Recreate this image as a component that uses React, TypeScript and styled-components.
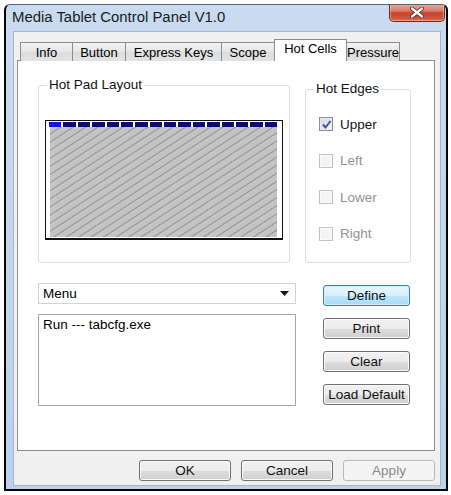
import React from 'react';
import styled, { createGlobalStyle, css } from 'styled-components';

const GlobalStyle = createGlobalStyle`
    html, body {
        margin: 0;
        padding: 0;
        background: #ffffff;
    }
    * {
        box-sizing: border-box;
    }
    body {
        font-family: 'Liberation Sans', Arial, sans-serif;
        font-size: 13.5px;
        color: #000;
    }
`;

const Window = styled.div`
    margin: 4px 0 0 4px;
    width: 444px;
    height: 487px;
    display: flex;
    flex-direction: column;
    border: 2px solid #050505;
    border-top: 1px solid #55677d;
    border-radius: 6px 6px 0 0;
    background: linear-gradient(#c9dbf1, #bcd1ea);
    overflow: hidden;
`;

const TitleBar = styled.div`
    height: 25px;
    flex: none;
    display: flex;
    align-items: flex-start;
    justify-content: space-between;
    padding-left: 6px;
    padding-right: 1px;
`;

const TitleText = styled.div`
    font-size: 14.9px;
    line-height: 25px;
    color: #1b1b1b;
`;

const CloseButton = styled.div`
    width: 56px;
    height: 18px;
    margin-top: -1px;
    display: flex;
    align-items: center;
    justify-content: center;
    border: 1px solid #6e2b20;
    border-top: none;
    border-radius: 0 0 5px 5px;
    background: linear-gradient(#e9aa9b 0%, #d9806b 40%, #c6442d 52%, #d0563c 85%, #e07a5c 100%);
    box-shadow: inset 0 0 0 1px rgba(255, 210, 200, 0.45);
`;

const FrameBody = styled.div`
    flex: 1;
    display: flex;
    padding: 1px 5px 4px 7px;
`;

const Client = styled.div`
    flex: 1;
    display: flex;
    flex-direction: column;
    background: #f0f0f0;
    border: 1px solid #a4b6cc;
    padding: 0 4px 4px 3px;
`;

const TabStrip = styled.div`
    height: 29px;
    margin-bottom: -1px;
    display: flex;
    align-items: flex-end;
    padding-left: 4px;
    position: relative;
    z-index: 1;
`;

const Tab = styled.div<{ $active?: boolean; $w: number }>`
    width: ${(p) => p.$w}px;
    height: 19px;
    display: flex;
    align-items: center;
    justify-content: center;
    white-space: nowrap;
    font-size: 13px;
    border: 1px solid #898c95;
    border-bottom: none;
    margin-left: -1px;
    background: linear-gradient(#f3f3f3, #e5e5e5 50%, #dcdcdc 51%, #e3e3e3);
    ${(p) =>
        p.$active &&
        css`
            height: 22px;
            padding-bottom: 4px;
            background: #ffffff;
        `}
`;

const TabPage = styled.div`
    width: 418px;
    height: 391px;
    background: #ffffff;
    border: 1px solid #898c95;
    padding: 16px 0 0 20px;
    display: flex;
    flex-direction: column;
`;

const TopRow = styled.div`
    display: flex;
    align-items: stretch;
    gap: 15px;
`;

const GroupBox = styled.fieldset<{ $w: number; $top?: number }>`
    width: ${(p) => p.$w}px;
    margin: ${(p) => p.$top || 0}px 0 0 0;
    padding: 0 6px 0 6px;
    border: 1px solid #d5dfe5;
    border-radius: 3px;
    min-width: 0;
`;

const Legend = styled.legend`
    padding: 0 2px;
    margin-left: 2px;
    line-height: 16px;
    font-size: 13.5px;
    color: #111;
`;

const Pad = styled.div`
    width: 238px;
    height: 120px;
    margin: 27px 0 22px 0;
    border: 1px solid #111;
    border-bottom-width: 2px;
    background: #ffffff;
    padding: 1px 5px 1px 3px;
    display: flex;
    flex-direction: column;
`;

const CellRow = styled.div`
    height: 5px;
    flex: none;
    display: flex;
    gap: 2px;
`;

const Cell = styled.div<{ $on?: boolean }>`
    flex: 1;
    background: ${(p) => (p.$on ? '#1010f0' : '#0a0a78')};
`;

const Hatch = styled.div`
    flex: 1;
    margin: 0 0 0 1px;
    background: repeating-linear-gradient(147deg, #c6c6c6 0px, #c2c2c2 5.2px, #9e9e9e 5.4px, #a4a4a4 6.6px, #c6c6c6 6.8px);
`;

const EdgeList = styled.div`
    display: flex;
    flex-direction: column;
    gap: 20.5px;
    padding: 19px 0 0 7px;
`;

const CheckRow = styled.div<{ $disabled?: boolean }>`
    height: 16px;
    display: flex;
    align-items: center;
    gap: 7px;
    color: ${(p) => (p.$disabled ? '#929292' : '#151515')};
`;

const CheckBox = styled.div<{ $checked?: boolean; $disabled?: boolean }>`
    width: 14px;
    height: 14px;
    display: flex;
    align-items: center;
    justify-content: center;
    border: 1px solid ${(p) => (p.$disabled ? '#c2c2c2' : '#8e8f8f')};
    background: ${(p) =>
        p.$disabled ? '#f4f4f4' : 'linear-gradient(135deg, #cfd7e3, #f4f6f9)'};
    box-shadow: inset 0 0 0 1px ${(p) => (p.$disabled ? '#fbfbfb' : '#e8ecf2')};
`;

const BottomRow = styled.div`
    display: flex;
    gap: 27px;
    margin-top: 20px;
`;

const LeftCol = styled.div`
    width: 258px;
    display: flex;
    flex-direction: column;
    gap: 10px;
`;

const Combo = styled.div`
    height: 21px;
    display: flex;
    align-items: center;
    justify-content: space-between;
    padding: 0 6px 0 4px;
    border: 1px solid #d2d2d2;
    background: #ffffff;
`;

const ListBox = styled.div`
    height: 92px;
    border: 1px solid #a3a8b0;
    background: #ffffff;
    padding: 2px 4px;
    line-height: 16px;
`;

const ButtonCol = styled.div`
    width: 87px;
    display: flex;
    flex-direction: column;
    gap: 12px;
    padding-top: 2px;
`;

const Button = styled.div<{ $primary?: boolean; $disabled?: boolean; $w?: number }>`
    width: ${(p) => (p.$w ? `${p.$w}px` : '100%')};
    height: 21px;
    display: flex;
    align-items: center;
    justify-content: center;
    white-space: nowrap;
    border: 1px solid #707070;
    border-radius: 3px;
    background: linear-gradient(#f2f2f2 0%, #ebebeb 50%, #dddddd 51%, #cfcfcf 100%);
    box-shadow: inset 0 0 0 1px #fbfbfb;
    color: #111;
    ${(p) =>
        p.$primary &&
        css`
            border-color: #3c7fb1;
            background: linear-gradient(#eaf6fd 0%, #d9f0fc 50%, #bee6fd 51%, #a7d9f5 100%);
            box-shadow: inset 0 0 0 1px #d6eefb;
        `}
    ${(p) =>
        p.$disabled &&
        css`
            border-color: #b6babd;
            background: #f4f4f4;
            box-shadow: none;
            color: #8a8a8a;
        `}
`;

const Footer = styled.div`
    display: flex;
    justify-content: flex-end;
    gap: 10px;
    margin-top: 9px;
    padding-right: 1px;
`;

const tabs = [
    { label: 'Info', w: 53 },
    { label: 'Button', w: 54 },
    { label: 'Express Keys', w: 97 },
    { label: 'Scope', w: 54 },
    { label: 'Hot Cells', w: 73, active: true },
    { label: 'Pressure', w: 54 },
];

const edges = [
    { label: 'Upper', checked: true, disabled: false },
    { label: 'Left', checked: false, disabled: true },
    { label: 'Lower', checked: false, disabled: true },
    { label: 'Right', checked: false, disabled: true },
];

function CloseGlyph() {
    return (
        <svg width="14" height="11" viewBox="0 0 14 11">
            <path d="M2 1.5 L12 9.5 M12 1.5 L2 9.5" stroke="#5a1e16" strokeWidth="4" strokeLinecap="round" />
            <path d="M2 1.5 L12 9.5 M12 1.5 L2 9.5" stroke="#ffffff" strokeWidth="2.4" strokeLinecap="round" />
        </svg>
    );
}

function CheckMark() {
    return (
        <svg width="11" height="11" viewBox="0 0 11 11">
            <path d="M2 5.5 L4.5 8.5 L9.5 2" fill="none" stroke="#3d5694" strokeWidth="2" />
        </svg>
    );
}

function DownArrow() {
    return (
        <svg width="9" height="5" viewBox="0 0 9 5">
            <path d="M0 0 H9 L4.5 5 Z" fill="#111" />
        </svg>
    );
}

export default function App() {
    return (
        <>
            <GlobalStyle />
            <Window>
                <TitleBar>
                    <TitleText>Media Tablet Control Panel V1.0</TitleText>
                    <CloseButton>
                        <CloseGlyph />
                    </CloseButton>
                </TitleBar>
                <FrameBody>
                    <Client>
                        <TabStrip>
                            {tabs.map((t) => (
                                <Tab key={t.label} $w={t.w} $active={t.active}>
                                    {t.label}
                                </Tab>
                            ))}
                        </TabStrip>
                        <TabPage>
                            <TopRow>
                                <GroupBox $w={252}>
                                    <Legend>Hot Pad Layout</Legend>
                                    <Pad>
                                        <CellRow>
                                            {Array.from({ length: 16 }).map((_, i) => (
                                                <Cell key={i} $on={i === 0} />
                                            ))}
                                        </CellRow>
                                        <Hatch />
                                    </Pad>
                                </GroupBox>
                                <GroupBox $w={106} $top={4}>
                                    <Legend>Hot Edges</Legend>
                                    <EdgeList>
                                        {edges.map((e) => (
                                            <CheckRow key={e.label} $disabled={e.disabled}>
                                                <CheckBox $checked={e.checked} $disabled={e.disabled}>
                                                    {e.checked && <CheckMark />}
                                                </CheckBox>
                                                {e.label}
                                            </CheckRow>
                                        ))}
                                    </EdgeList>
                                </GroupBox>
                            </TopRow>
                            <BottomRow>
                                <LeftCol>
                                    <Combo>
                                        <span>Menu</span>
                                        <DownArrow />
                                    </Combo>
                                    <ListBox>Run --- tabcfg.exe</ListBox>
                                </LeftCol>
                                <ButtonCol>
                                    <Button $primary>Define</Button>
                                    <Button>Print</Button>
                                    <Button>Clear</Button>
                                    <Button>Load Default</Button>
                                </ButtonCol>
                            </BottomRow>
                        </TabPage>
                        <Footer>
                            <Button $w={92}>OK</Button>
                            <Button $w={92}>Cancel</Button>
                            <Button $w={92} $disabled>
                                Apply
                            </Button>
                        </Footer>
                    </Client>
                </FrameBody>
            </Window>
        </>
    );
}
